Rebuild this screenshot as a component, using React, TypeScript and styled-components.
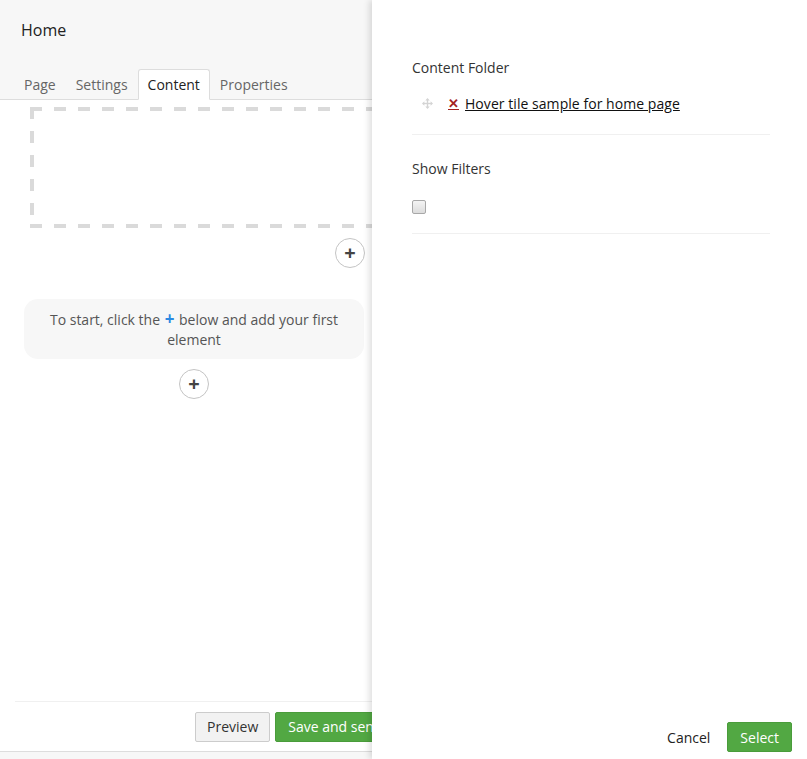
import React from 'react'
import styled, { createGlobalStyle } from 'styled-components'

const Global = createGlobalStyle`
  html, body {
    margin: 0;
    padding: 0;
    height: 100%;
    background: #fff;
    font-family: "Open Sans", "Noto Sans", sans-serif;
    color: #333;
  }
  #root { height: 100%; }
`

const Page = styled.div`
  position: relative;
  height: 759px;
  display: flex;
  flex-direction: column;
  overflow: hidden;
`

const Header = styled.div`
  background: #f7f7f7;
  height: 100px;
  display: flex;
  flex-direction: column;
  justify-content: space-between;
  border-bottom: 1px solid #ddd;
  box-sizing: border-box;
`

const Title = styled.h1`
  margin: 0;
  padding: 19px 21px 0;
  font-size: 16px;
  font-weight: 400;
  color: #222;
  line-height: 22px;
`

const Tabs = styled.div`
  display: flex;
  padding-left: 14px;
  margin-bottom: -1px;
`

const Tab = styled.div<{ $active?: boolean }>`
  padding: 0 9px;
  height: 31px;
  line-height: 29px;
  font-size: 14px;
  color: ${p => (p.$active ? '#222' : '#666')};
  background: ${p => (p.$active ? '#fff' : 'transparent')};
  border: 1px solid ${p => (p.$active ? '#ddd' : 'transparent')};
  border-bottom-color: ${p => (p.$active ? '#fff' : 'transparent')};
  border-radius: 3px 3px 0 0;
  box-sizing: border-box;
`

const Editor = styled.div`
  flex: 1;
  display: flex;
  flex-direction: column;
  padding-top: 7px;
`

const dash = '#dadada 0 12px, transparent 12px 24px'

const DropZone = styled.div`
  margin-left: 30px;
  width: 380px;
  height: 121px;
  box-sizing: border-box;
  background:
    repeating-linear-gradient(to right, ${dash}) top left / 100% 4px no-repeat,
    repeating-linear-gradient(to right, ${dash}) bottom left / 100% 4px no-repeat,
    repeating-linear-gradient(to bottom, ${dash}) top left / 4px 100% no-repeat;
`

const AddRow = styled.div<{ $align: 'end' | 'center' }>`
  display: flex;
  justify-content: ${p => (p.$align === 'end' ? 'flex-end' : 'center')};
  width: ${p => (p.$align === 'end' ? '365px' : '388px')};
  margin-top: 10px;
`

const AddButton = styled.div`
  width: 30px;
  height: 30px;
  border-radius: 50%;
  border: 1px solid #c4c4c4;
  box-sizing: border-box;
  background: #fff;
  display: flex;
  align-items: center;
  justify-content: center;
  color: #444;
  font-size: 20px;
  font-weight: 700;
  line-height: 1;
`

const Hint = styled.div`
  margin: 31px 0 0 24px;
  width: 340px;
  height: 60px;
  box-sizing: border-box;
  background: #f7f7f7;
  border-radius: 14px;
  display: flex;
  align-items: center;
  justify-content: center;
  text-align: center;
  padding: 0 20px;
  font-size: 14px;
  line-height: 20px;
  color: #555;
`

const BluePlus = styled.span`
  color: #2b8ae2;
  font-weight: 700;
  font-size: 17px;
  line-height: 20px;
  margin: 0 1px;
`

const Footer = styled.div`
  border-top: 1px solid #f0f0f0;
  margin-left: 15px;
  height: 50px;
  display: flex;
  align-items: center;
  gap: 5px;
  padding-left: 180px;
  box-sizing: border-box;
`

const Button = styled.button<{ $primary?: boolean }>`
  height: 30px;
  padding: 0 ${p => (p.$primary ? 12 : 11)}px;
  font-family: inherit;
  font-size: 14px;
  border-radius: 2px;
  border: 1px solid ${p => (p.$primary ? '#4a9c3b' : '#ccc')};
  background: ${p => (p.$primary ? '#52a843' : '#f2f2f2')};
  color: ${p => (p.$primary ? '#fff' : '#333')};
  white-space: nowrap;
`

const BottomStrip = styled.div`
  height: 7px;
  border-top: 1px solid #ddd;
  background: #f7f7f7;
`

const Panel = styled.div`
  position: absolute;
  top: 0;
  right: 0;
  bottom: 0;
  width: 435px;
  background: #fff;
  box-shadow: -3px 0 6px rgba(0, 0, 0, 0.12);
  display: flex;
  flex-direction: column;
`

const PanelBody = styled.div`
  flex: 1;
  padding: 58px 37px 0 40px;
`

const Field = styled.div`
  border-bottom: 1px solid #f0f0f0;
`

const Label = styled.div<{ $gap?: number }>`
  font-size: 14px;
  line-height: 20px;
  color: #333;
  margin-top: ${p => p.$gap ?? 0}px;
`

const ItemRow = styled.div`
  display: flex;
  align-items: center;
  height: 30px;
  margin: 10px 0 16px;
  padding-left: 10px;
`

const Remove = styled.span`
  color: #a32222;
  font-size: 13px;
  font-weight: 700;
  text-decoration: underline;
  text-decoration-color: #a32222;
  margin-left: 15px;
`

const ItemLink = styled.a`
  color: #111;
  font-size: 14px;
  text-decoration: underline;
  margin-left: 6px;
  letter-spacing: 0.05px;
`

const CheckRow = styled.div`
  height: 28px;
  margin: 14px 0 12px;
  display: flex;
  align-items: center;
`

const Check = styled.div`
  width: 12px;
  height: 12px;
  border: 1px solid #a8a8a8;
  border-radius: 2px;
  background: linear-gradient(#f4f4f4, #dcdcdc);
`

const PanelFooter = styled.div`
  display: flex;
  justify-content: flex-end;
  align-items: center;
  gap: 17px;
  padding: 0 15px 7px 0;
  height: 30px;
`

const LinkButton = styled.span`
  font-size: 14px;
  color: #222;
`

function DragIcon() {
  return (
    <svg width="11" height="11" viewBox="0 0 11 11" fill="#d4d4d4">
      <rect x="4.8" y="1" width="1.4" height="9" />
      <rect x="1" y="4.8" width="9" height="1.4" />
      <polygon points="5.5,0 3.3,2.4 7.7,2.4" />
      <polygon points="5.5,11 3.3,8.6 7.7,8.6" />
      <polygon points="0,5.5 2.4,3.3 2.4,7.7" />
      <polygon points="11,5.5 8.6,3.3 8.6,7.7" />
    </svg>
  )
}

export default function App() {
  return (
    <Page>
      <Global />
      <Header>
        <Title>Home</Title>
        <Tabs>
          <Tab>Page</Tab>
          <Tab>Settings</Tab>
          <Tab $active>Content</Tab>
          <Tab>Properties</Tab>
        </Tabs>
      </Header>
      <Editor>
        <DropZone />
        <AddRow $align="end">
          <AddButton>+</AddButton>
        </AddRow>
        <Hint>
          <span>
            To start, click the <BluePlus>+</BluePlus> below and add your first element
          </span>
        </Hint>
        <AddRow $align="center">
          <AddButton>+</AddButton>
        </AddRow>
      </Editor>
      <Footer>
        <Button>Preview</Button>
        <Button $primary>Save and send</Button>
      </Footer>
      <BottomStrip />

      <Panel>
        <PanelBody>
          <Field>
            <Label>Content Folder</Label>
            <ItemRow>
              <DragIcon />
              <Remove>✕</Remove>
              <ItemLink href="#">Hover tile sample for home page</ItemLink>
            </ItemRow>
          </Field>
          <Field>
            <Label $gap={24}>Show Filters</Label>
            <CheckRow>
              <Check />
            </CheckRow>
          </Field>
        </PanelBody>
        <PanelFooter>
          <LinkButton>Cancel</LinkButton>
          <Button $primary>Select</Button>
        </PanelFooter>
      </Panel>
    </Page>
  )
}
